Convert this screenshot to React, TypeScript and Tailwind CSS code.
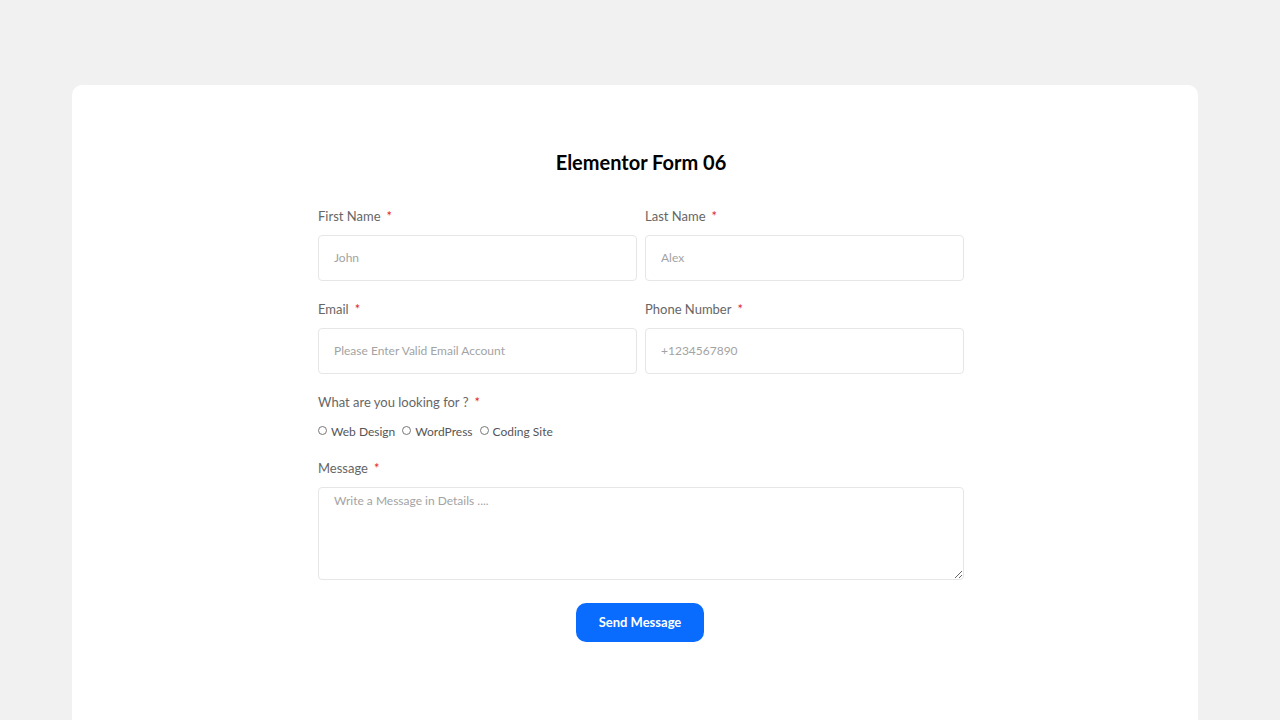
import React from 'react';

function Label({ text }: { text: string }) {
  return (
    <label className="block text-[13px] leading-5 text-[#666]">
      {text}
      <span className="ml-[6px] text-[#e0262b]">*</span>
    </label>
  );
}

function Field({ label, placeholder }: { label: string; placeholder: string }) {
  return (
    <div className="flex flex-col gap-[9px]">
      <Label text={label} />
      <input
        placeholder={placeholder}
        className="h-[46px] w-full rounded-[4px] border border-[#e6e6e6] bg-white pl-[15px] pr-4 pb-[2px] text-[12px] text-[#555] outline-none placeholder:text-[#a3a3a3]"
      />
    </div>
  );
}

function Radio({ text }: { text: string }) {
  return (
    <label className="flex items-center gap-[4px] text-[12px] text-[#555]">
      <span className="mb-[3px] h-[9px] w-[9px] rounded-full border border-[#777]" />
      {text}
    </label>
  );
}

export default function App() {
  return (
    <div className="min-h-screen bg-[#f1f1f1] pt-[85px] font-['Lato',sans-serif]">
      <div className="ml-[72px] h-[700px] w-[1126px] rounded-[10px] bg-white pt-[65px]">
        <div className="ml-[246px] w-[646px]">
          <h1 className="text-center text-[20px] font-bold leading-6 text-black">Elementor Form 06</h1>

          <div className="mt-8 grid grid-cols-2 gap-x-[8px] gap-y-[18px]">
            <Field label="First Name" placeholder="John" />
            <Field label="Last Name" placeholder="Alex" />
            <Field label="Email" placeholder="Please Enter Valid Email Account" />
            <Field label="Phone Number" placeholder="+1234567890" />
          </div>

          <div className="mt-[18px]">
            <Label text="What are you looking for ?" />
            <div className="mt-[10px] flex h-5 items-center gap-[7px]">
              <Radio text="Web Design" />
              <Radio text="WordPress" />
              <Radio text="Coding Site" />
            </div>
          </div>

          <div className="mt-[16px] flex flex-col gap-[9px]">
            <Label text="Message" />
            <textarea
              placeholder="Write a Message in Details ...."
              className="h-[93px] w-full rounded-[4px] border border-[#e6e6e6] pl-[15px] pr-4 py-[4px] text-[12px] text-[#555] outline-none placeholder:text-[#a3a3a3]"
            />
          </div>

          <div className="mt-[23px] flex justify-center pr-[2px]">
            <button className="h-[39px] w-[128px] rounded-[10px] bg-[#0a6cff] text-[13px] font-bold text-white">
              Send Message
            </button>
          </div>
        </div>
      </div>
    </div>
  );
}
